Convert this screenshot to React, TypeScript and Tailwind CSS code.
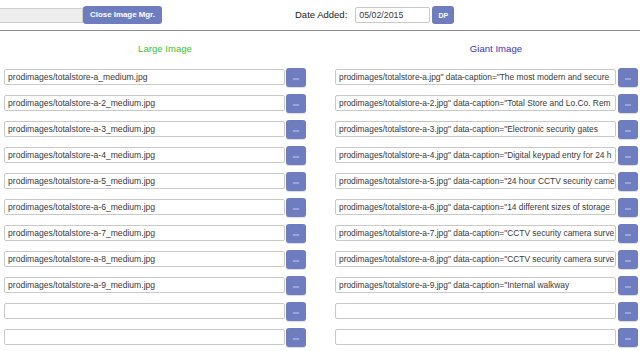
import React from "react";

const large = [
  "prodimages/totalstore-a_medium.jpg",
  "prodimages/totalstore-a-2_medium.jpg",
  "prodimages/totalstore-a-3_medium.jpg",
  "prodimages/totalstore-a-4_medium.jpg",
  "prodimages/totalstore-a-5_medium.jpg",
  "prodimages/totalstore-a-6_medium.jpg",
  "prodimages/totalstore-a-7_medium.jpg",
  "prodimages/totalstore-a-8_medium.jpg",
  "prodimages/totalstore-a-9_medium.jpg",
  "",
  "",
];

const giant = [
  'prodimages/totalstore-a.jpg" data-caption="The most modern and secure',
  'prodimages/totalstore-a-2.jpg" data-caption="Total Store and Lo.Co. Rem',
  'prodimages/totalstore-a-3.jpg" data-caption="Electronic security gates',
  'prodimages/totalstore-a-4.jpg" data-caption="Digital keypad entry for 24 h',
  'prodimages/totalstore-a-5.jpg" data-caption="24 hour CCTV security came',
  'prodimages/totalstore-a-6.jpg" data-caption="14 different sizes of storage',
  'prodimages/totalstore-a-7.jpg" data-caption="CCTV security camera surve',
  'prodimages/totalstore-a-8.jpg" data-caption="CCTV security camera surve',
  'prodimages/totalstore-a-9.jpg" data-caption="Internal walkway',
  "",
  "",
];

function Field({ value, w, size }: { value: string; w: string; size: string }) {
  return (
    <div
      className={`${w} ${size} h-[16px] border border-[#c9c9c9] rounded-[2px] bg-white pl-[3px] leading-[14px] text-[#3a3a3a] overflow-hidden whitespace-nowrap`}
    >
      {value}
    </div>
  );
}

function Dots() {
  return (
    <div className="w-[20px] h-[19px] rounded-[3px] bg-[#6e7dbf] shadow-[0_1px_1px_rgba(0,0,0,0.15)]">
      <svg width="20" height="19" viewBox="0 0 20 19">
        <circle cx="8" cy="11" r="0.7" fill="#e8ebf7" />
        <circle cx="10" cy="11" r="0.7" fill="#e8ebf7" />
        <circle cx="12" cy="11" r="0.7" fill="#e8ebf7" />
      </svg>
    </div>
  );
}

export default function App() {
  return (
    <div
      className="w-[640px] h-[351px] bg-white overflow-hidden"
      style={{ fontFamily: '"Liberation Sans", Arial, sans-serif' }}
    >
      <div className="h-[31px] border-b border-[#8a8a8a] flex items-center">
        <div className="w-[83px] h-[15px] bg-[#eeeeee] border border-[#cfcfcf] border-l-0" />
        <div className="w-[79px] h-[18px] rounded-[3px] bg-[#6e7dbf] flex items-center justify-center">
          <span className="text-white text-[7.9px] font-bold leading-none">Close Image Mgr.</span>
        </div>
        <span className="ml-[133px] text-[9.5px] text-[#222]">Date Added:</span>
        <div className="ml-[8px] w-[75px] h-[16px] border border-[#c9c9c9] rounded-[2px] pl-[3px] text-[8.8px] leading-[14px] text-[#3a3a3a]">
          05/02/2015
        </div>
        <div className="ml-[2px] w-[22px] h-[18px] rounded-[3px] bg-[#6e7dbf] flex items-center justify-center">
          <span className="text-white text-[7px] font-bold leading-none">DP</span>
        </div>
      </div>
      <div className="h-[33px] flex items-center pt-[3px]">
        <div className="w-[330px] text-center text-[9.6px] text-[#3fbf2f]">Large Image</div>
        <div className="ml-[22px] w-[288px] text-center text-[9.6px] text-[#4433b8]">Giant Image</div>
      </div>
      <div className="flex flex-col">
        {large.map((l, i) => (
          <div key={i} className="h-[26px] flex items-center">
            <div className="ml-[4px]">
              <Field value={l} w="w-[281px]" size="text-[8.6px]" />
            </div>
            <div className="ml-[1px]">
              <Dots />
            </div>
            <div className="ml-[29px]">
              <Field value={giant[i]} w="w-[281px]" size="text-[8.4px]" />
            </div>
            <div className="ml-[2px]">
              <Dots />
            </div>
          </div>
        ))}
      </div>
    </div>
  );
}
